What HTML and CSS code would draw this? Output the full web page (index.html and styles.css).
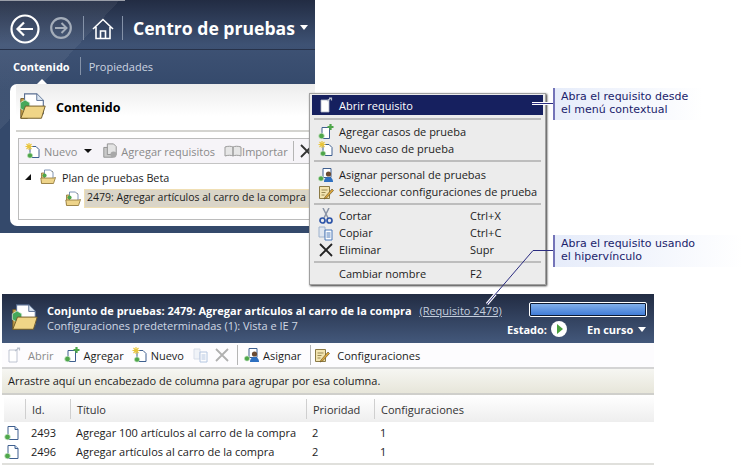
FILE: index.html
```html
<!DOCTYPE html>
<html lang="es">
<head>
  <meta charset="UTF-8">
  <title>Centro de pruebas</title>
  <link rel="stylesheet" href="styles.css">
</head>
<body>
<svg class="defs" width="0" height="0">
  <defs>
    <symbol id="i-doc" viewBox="0 0 16 16">
      <path d="M4 1.5h7l3 3v10H4z" fill="#fff" stroke="#3f5f8f"/>
      <path d="M11 1.5v3h3" fill="#cfe0f2" stroke="#3f5f8f"/>
      <circle cx="3.5" cy="12" r="2.8" fill="#4ea64a" stroke="#cfe8cc" stroke-width=".7"/>
    </symbol>
    <symbol id="i-doc-add" viewBox="0 0 16 16">
      <path d="M4 3.5h7.5v11H4z" fill="#fff" stroke="#3f5f8f"/>
      <circle cx="3.5" cy="12" r="2.8" fill="#4ea64a" stroke="#cfe8cc" stroke-width=".7"/>
      <path d="M12.5 0v6M9.500 3h6" stroke="#4ea64a" stroke-width="2.200"/>
    </symbol>
    <symbol id="i-doc-new" viewBox="0 0 16 16">
      <path d="M5 3.500h6l3 3v8H5z" fill="#fff" stroke="#3f5f8f"/>
      <circle cx="5" cy="12.500" r="2.600" fill="#4ea64a" stroke="#cfe8cc" stroke-width=".7"/>
      <path d="M4 0v7M.500 3.500h7M1.500 1l5 5M6.500 1l-5 5" stroke="#e9c53a" stroke-width="1.100"/>
    </symbol>
    <symbol id="i-open" viewBox="0 0 16 16">
      <path d="M3 3h8v12H3z" fill="#fff" stroke="#aeb6c6" stroke-width=".8"/>
      <path d="M9 4l4-3M11 1h2.500v2.500" fill="none" stroke="#b9c0cc" stroke-width="1.200"/>
    </symbol>
    <symbol id="i-person" viewBox="0 0 16 16">
      <path d="M5 1.500h8v9H5z" fill="#fff" stroke="#3f5f8f"/>
      <circle cx="3" cy="11.500" r="2.600" fill="#4ea64a" stroke="#cfe8cc" stroke-width=".7"/>
      <circle cx="10.500" cy="7" r="2.600" fill="#6b4a30"/>
      <path d="M6 15c0-3.500 2-5 4.500-5s4.500 1.500 4.500 5z" fill="#2d6fc0"/>
    </symbol>
    <symbol id="i-config" viewBox="0 0 16 16">
      <path d="M1.500 2.500h10v12h-10z" fill="#f3e4b0" stroke="#8b7a45"/>
      <path d="M3.500 6h6M3.500 8.500h4M3.500 11h3" stroke="#9a8a55"/>
      <path d="M7 13l7-8 1.500 1.500-7 7.500-2.500 1z" fill="#e0a83a" stroke="#6d5a2c" stroke-width=".7"/>
    </symbol>
    <symbol id="i-folder" viewBox="0 0 16 16">
      <path d="M1.500 4h5l1-1.500h5V14h-11z" fill="#e7c878" stroke="#8d7336" stroke-width=".8"/>
      <path d="M4.500 1h6l2.500 2.500V10h-8.500z" fill="#fff" stroke="#5f7ba3" stroke-width=".8"/>
      <circle cx="4.500" cy="6.500" r="2.100" fill="#4ea64a"/>
      <path d="M.800 9h12.700l2-.500-2 6h-12z" fill="#eed48a" stroke="#8d7336" stroke-width=".8"/>
    </symbol>
    <symbol id="i-folder-big" viewBox="0 0 32 32">
      <path d="M3 7h7v21H3z" fill="#c9a24a" stroke="#6f5a27"/>
      <path d="M7 2h13l7 7v14H7z" fill="#fff" stroke="#5a6f92" stroke-width="1.200"/>
      <path d="M20 2v7h7" fill="#dbe6f2" stroke="#5a6f92"/>
      <path d="M7.500 8.500l5 3v6l-5 3-5-3v-6z" fill="#46a85a" stroke="#d5ecd8" stroke-width=".8"/>
      <path d="M3 28l5-13h21l-4 13z" fill="#f0d587" stroke="#6f5a27"/>
    </symbol>
    <symbol id="i-multi" viewBox="0 0 16 16">
      <path d="M1 2h6v10H1z" fill="#dfe6f0" stroke="#9fb2cc"/>
      <path d="M7 5h7v10H7z" fill="#fff" stroke="#4a78b8"/>
      <path d="M8.500 8h4M8.500 10h4M8.500 12h4" stroke="#4a78b8"/>
    </symbol>
    <symbol id="i-scissors" viewBox="0 0 16 16">
      <path d="M5 0l5 10M11 0L6 10" stroke="#8a94a6" stroke-width="1.500"/>
      <circle cx="4.500" cy="12.500" r="2.500" fill="none" stroke="#2e55a8" stroke-width="1.700"/>
      <circle cx="11.500" cy="12.500" r="2.500" fill="none" stroke="#2e55a8" stroke-width="1.700"/>
    </symbol>
    <symbol id="i-x" viewBox="0 0 16 16">
      <path d="M2 2l12 12M14 2L2 14" stroke="currentColor" stroke-width="1.800"/>
    </symbol>
    <symbol id="i-book" viewBox="0 0 18 12">
      <path d="M1 2c3-1 6-1 8 0v9c-2-1-5-1-8 0zM9 2c2-1 5-1 8 0v9c-3-1-6-1-8 0z" fill="#e6e6e6" stroke="#9b9b9b"/>
    </symbol>
    <symbol id="i-req" viewBox="0 0 18 18">
      <path d="M2 5h10v11H2z" fill="#c9c9c9" stroke="#8c8c8c"/>
      <path d="M6 1h7l3 3v9H6z" fill="#e3e3e3" stroke="#8c8c8c"/>
      <circle cx="13" cy="13" r="3.500" fill="#a8a8a8"/>
    </symbol>
  </defs>
</svg>

<section class="app">
  <header class="app-head">
    <svg class="nav-back" viewBox="0 0 30 30"><circle cx="15" cy="15" r="13.500" fill="none" stroke="#fff" stroke-width="2.200"/><path d="M23 15H8M14 8.500L7.500 15l6.500 6.500" fill="none" stroke="#fff" stroke-width="2.200"/></svg>
    <svg class="nav-next" viewBox="0 0 22 22"><circle cx="11" cy="11" r="9.800" fill="none" stroke="#a4adba" stroke-width="2.200"/><path d="M5 11h11M11.500 6l5 5-5 5" fill="none" stroke="#a4adba" stroke-width="2"/></svg>
    <span class="head-sep"></span>
    <svg class="nav-home" viewBox="0 0 22 22"><path d="M1 11L11 1.500 21 11M4 9v11.500h14V9M8.500 20.500V13h5v7.500" fill="none" stroke="#fff" stroke-width="1.600"/></svg>
    <span class="head-sep"></span>
    <h1 class="app-title">Centro de pruebas</h1>
    <span class="caret"></span>
  </header>
  <nav class="tabs">
    <span class="tab tab-on">Contenido</span>
    <span class="tab-sep"></span>
    <span class="tab">Propiedades</span>
  </nav>
  <div class="card">
    <div class="card-head">
      <svg class="icon-big"><use href="#i-folder-big"/></svg>
      <h2>Contenido</h2>
    </div>
    <div class="tree-box">
      <div class="tree-bar">
        <svg class="ic"><use href="#i-doc-new"/></svg>
        <span class="dim bar-nuevo">Nuevo</span>
        <span class="caret-dark"></span>
        <svg class="ic ic-req"><use href="#i-req"/></svg>
        <span class="dim">Agregar requisitos</span>
        <svg class="ic-book"><use href="#i-book"/></svg>
        <span class="dim">Importar</span>
        <span class="bar-sep"></span>
        <svg class="ic ic-x"><use href="#i-x"/></svg>
      </div>
      <div class="tree-row tree-root">
        <span class="tree-arrow"></span>
        <svg class="ic"><use href="#i-folder"/></svg>
        <span>Plan de pruebas Beta</span>
      </div>
      <div class="tree-row tree-child">
        <svg class="ic"><use href="#i-folder"/></svg>
        <span class="tree-sel">2479: Agregar artículos al carro de la compra</span>
      </div>
    </div>
  </div>
</section>

<section class="suite">
  <header class="suite-head">
    <svg class="icon-suite"><use href="#i-folder-big"/></svg>
    <div class="suite-info">
      <p class="suite-name">Conjunto de pruebas: 2479: Agregar artículos al carro de la compra <a class="suite-link">(Requisito 2479)</a></p>
      <p class="suite-conf">Configuraciones predeterminadas (1): Vista e IE 7</p>
    </div>
    <div class="suite-state">
      <div class="progress"></div>
      <div class="state-row">
        <b>Estado:</b>
        <span class="play"></span>
        <b class="state-val">En curso</b>
        <span class="caret caret-small"></span>
      </div>
    </div>
  </header>
  <div class="suite-bar">
    <svg class="ic"><use href="#i-open"/></svg>
    <span class="dim b-abrir">Abrir</span>
    <svg class="ic b-add"><use href="#i-doc-add"/></svg>
    <span class="b-addt">Agregar</span>
    <svg class="ic b-new"><use href="#i-doc-new"/></svg>
    <span class="b-addt">Nuevo</span>
    <svg class="ic b-copy"><use href="#i-multi"/></svg>
    <svg class="ic b-del"><use href="#i-x"/></svg>
    <span class="bar-sep b-sep"></span>
    <svg class="ic"><use href="#i-person"/></svg>
    <span class="b-addt">Asignar</span>
    <span class="bar-sep b-sep2"></span>
    <svg class="ic"><use href="#i-config"/></svg>
    <span class="b-conf">Configuraciones</span>
  </div>
  <div class="group-hint">Arrastre aquí un encabezado de columna para agrupar por esa columna.</div>
  <div class="grid">
    <div class="grid-row grid-top">
      <span></span><span>Id.</span><span>Título</span><span>Prioridad</span><span>Configuraciones</span>
    </div>
    <div class="grid-row">
      <svg class="ic"><use href="#i-doc"/></svg><span>2493</span><span>Agregar 100 artículos al carro de la compra</span><span>2</span><span>1</span>
    </div>
    <div class="grid-row">
      <svg class="ic"><use href="#i-doc"/></svg><span>2496</span><span>Agregar artículos al carro de la compra</span><span>2</span><span>1</span>
    </div>
  </div>
</section>

<div class="menu">
  <div class="menu-item menu-on"><svg class="ic"><use href="#i-open"/></svg><span>Abrir requisito</span></div>
  <hr>
  <div class="menu-item"><svg class="ic"><use href="#i-doc-add"/></svg><span>Agregar casos de prueba</span></div>
  <div class="menu-item"><svg class="ic"><use href="#i-doc-new"/></svg><span>Nuevo caso de prueba</span></div>
  <hr class="sep-tall">
  <div class="menu-item"><svg class="ic"><use href="#i-person"/></svg><span>Asignar personal de pruebas</span></div>
  <div class="menu-item"><svg class="ic"><use href="#i-config"/></svg><span>Seleccionar configuraciones de prueba</span></div>
  <hr class="sep-short">
  <div class="menu-item"><svg class="ic"><use href="#i-scissors"/></svg><span>Cortar</span><kbd>Ctrl+X</kbd></div>
  <div class="menu-item"><svg class="ic"><use href="#i-multi"/></svg><span>Copiar</span><kbd>Ctrl+C</kbd></div>
  <div class="menu-item"><svg class="ic ic-del"><use href="#i-x"/></svg><span>Eliminar</span><kbd>Supr</kbd></div>
  <hr class="sep-short">
  <div class="menu-item"><span class="ic"></span><span>Cambiar nombre</span><kbd>F2</kbd></div>
</div>

<svg class="leaders" width="744" height="469">
  <path d="M532 103.500h21" fill="none" stroke="#fff" stroke-width="3"/>
  <path d="M532 103.500h21" fill="none" stroke="#2b2c80"/>
  <path d="M495.500 294L487 304" fill="none" stroke="#fff" stroke-width="3"/>
  <path d="M553 250.500h-20L487 304" fill="none" stroke="#2b2c80"/>
</svg>
<p class="note note-menu">Abra el requisito desde<br>el menú contextual</p>
<p class="note note-link">Abra el requisito usando<br>el hipervínculo</p>
</body>
</html>
```

FILE: styles.css
```css
* {
  box-sizing: border-box;
}
html, body {
  margin: 0;
  height: 469px;
  overflow: hidden;
}
body {
  position: relative;
  background: #fff;
  color: #1c1c1c;
  font-family: "Open Sans", "Noto Sans", sans-serif;
  font-size: 11px;
}
p, h1, h2 {
  margin: 0;
}
.defs {
  position: absolute;
}
.ic {
  width: 16px;
  height: 16px;
  flex: none;
}
.dim {
  color: #8a8a8a;
}

/* top window */
.app {
  width: 315px;
  height: 233px;
  background:
    linear-gradient(#9a9ea8, #9a9ea8) no-repeat 0 0 / 125px 1px,
    linear-gradient(132.700deg, rgba(255, 255, 255, .06) 88px, transparent 88px),
    linear-gradient(#222c43, #3e5274 45px, #34496b 90px, #34496b);
  overflow: hidden;
}
.app-head {
  display: flex;
  align-items: center;
  height: 50px;
  padding: 6px 0 0 10px;
  border-bottom: 1px solid #27324a;
}
.nav-back {
  width: 30px;
  height: 30px;
  margin-top: 2px;
}
.nav-next {
  width: 22px;
  height: 22px;
  margin-left: 10px;
}
.nav-home {
  width: 22px;
  height: 22px;
  margin: 2px 8px 0 8px;
}
.head-sep {
  width: 1px;
  height: 24px;
  margin-left: 11px;
  background: #8492a8;
}
.nav-home + .head-sep {
  margin-left: 0;
}
.app-title {
  margin-left: 10px;
  color: #fff;
  font-size: 17.600px;
  font-weight: 700;
  white-space: nowrap;
}
.caret {
  width: 0;
  height: 0;
  margin-left: 5px;
  border: 4px solid transparent;
  border-top: 5px solid #fff;
  border-bottom: 0;
}
.tabs {
  position: relative;
  display: flex;
  align-items: center;
  height: 34px;
  padding: 0 0 2px 13px;
  color: #ccd4e0;
}
.tab-on {
  color: #fff;
  font-weight: 700;
}
.tab-on::after {
  content: "";
  position: absolute;
  left: 37px;
  bottom: 0;
  border: 5px solid transparent;
  border-bottom-color: #fff;
  border-top: 0;
}
.tab-sep {
  width: 1px;
  height: 18px;
  margin: 0 8px 0 10px;
  background: #8492a8;
}
.card {
  height: 142px;
  margin-left: 10px;
  padding-bottom: 7px;
  background: #fff;
  border-radius: 7px 0 0 7px;
}
.card-head {
  display: flex;
  align-items: center;
  height: 48px;
  margin-left: 6px;
  padding-left: 2px;
  background: linear-gradient(#ececec, #fff 70%);
  border-bottom: 2px solid #d4d4d0;
}
.icon-big {
  width: 30px;
  height: 30px;
}
.card-head h2 {
  margin-left: 8px;
  color: #000;
  font-size: 12.500px;
  font-weight: 700;
}
.tree-box {
  height: 82px;
  margin: 6px 0 0 8px;
  border: 1px solid #bcbcbc;
  border-right: 0;
}
.tree-bar {
  display: flex;
  align-items: center;
  height: 25px;
  padding-left: 6px;
  background: #f6f4f8;
  border-bottom: 1px solid #c4c4c4;
  white-space: nowrap;
}
.bar-nuevo {
  margin-left: 3px;
}
.caret-dark {
  width: 0;
  height: 0;
  margin: 0 10px 0 7px;
  border: 4px solid transparent;
  border-top: 4px solid #111;
  border-bottom: 0;
}
.ic-req {
  margin-right: 3px;
}
.ic-book {
  width: 18px;
  height: 12px;
  margin-left: 9px;
}
.bar-sep {
  width: 1px;
  height: 20px;
  margin: 0 5px;
  background: #b5b5b5;
}
.ic-x {
  color: #333;
}
.tree-row {
  display: flex;
  align-items: center;
  white-space: nowrap;
}
.tree-root {
  gap: 6px;
  height: 24px;
  margin-top: 1px;
  padding-left: 6px;
  font-size: 10.800px;
}
.tree-arrow {
  width: 0;
  height: 0;
  margin-right: 3px;
  border-right: 6px solid #111;
  border-top: 6px solid transparent;
}
.tree-child {
  gap: 3px;
  padding-left: 46px;
}
.tree-sel {
  width: 240px;
  height: 19px;
  padding-left: 2px;
  font-size: 10.500px;
  line-height: 15px;
  background: #dad5c8;
  border: 1px solid #f0dfb4;
}

/* bottom suite panel */
.suite {
  width: 652px;
  height: 175px;
  margin: 61px 0 0 2px;
}
.suite-head {
  display: flex;
  height: 49px;
  padding: 8px 7px 0 8px;
  color: #fff;
  background: linear-gradient(#222c43, #43587b);
}
.icon-suite {
  width: 30px;
  height: 32px;
}
.suite-info {
  margin-left: 7px;
  padding-top: 1px;
  flex: 1;
  white-space: nowrap;
}
.suite-name {
  font-weight: 700;
  line-height: 15px;
}
.suite-link {
  margin-left: 5px;
  color: #c4cedd;
  font-weight: 400;
  text-decoration: underline;
}
.suite-conf {
  color: #d0d8e4;
  line-height: 15px;
}
.suite-state {
  width: 140px;
}
.progress {
  width: 118px;
  height: 15px;
  margin-left: 22px;
  background: linear-gradient(#86b3ec, #3b78d6);
  border: 1px solid #fff;
  outline: 1px solid #0c1a33;
  outline-offset: -2px;
  border-radius: 2px;
}
.state-row {
  display: flex;
  align-items: center;
  height: 16px;
  margin-top: 4px;
}
.play {
  position: relative;
  width: 16px;
  height: 16px;
  margin: 0 20px 0 4px;
  background: #fff;
  border-radius: 50%;
}
.play::after {
  content: "";
  position: absolute;
  left: 6px;
  top: 3px;
  border-left: 6px solid #49a03e;
  border-top: 5px solid transparent;
  border-bottom: 5px solid transparent;
}
.caret-small {
  margin-left: 5px;
}
.suite-bar {
  display: flex;
  align-items: center;
  height: 26px;
  padding-left: 4px;
  background: #fdfcfe;
  border-bottom: 2px solid #d4d4d4;
  white-space: nowrap;
}
.b-abrir {
  margin-left: 6px;
}
.b-add {
  margin-left: 11px;
}
.b-addt {
  margin-left: 3px;
}
.b-new {
  margin-left: 8px;
}
.b-copy {
  margin-left: 9px;
  opacity: .4;
}
.b-del {
  margin-left: 5px;
  color: #b0b0b0;
}
.b-sep {
  margin: 0 6px 0 7px;
}
.b-sep2 {
  margin: 0 3px 0 9px;
}
.b-conf {
  margin-left: 7px;
}
.group-hint {
  height: 26px;
  padding: 4px 0 0 6px;
  background: linear-gradient(#f6f6f2, #e7e6da);
  border-bottom: 2px solid #cfcfcb;
}
.grid {
  padding-bottom: 2px;
  border-bottom: 2px solid #e0e0dc;
}
.grid-row {
  display: grid;
  grid-template-columns: 21px 45px 236px 68px 1fr;
  align-items: center;
  height: 19px;
  margin-left: 2px;
}
.grid-row > span {
  padding-left: 6px;
}
.grid-top {
  height: 27px;
  margin-bottom: 1px;
  color: #333;
  background: linear-gradient(#fff, #eeeeee);
}
.grid-top > span {
  height: 20px;
  line-height: 21px;
  border-left: 1px solid #cfcfcf;
}
.grid-top > span:first-child {
  border-left: 0;
}

/* context menu */
.menu {
  position: absolute;
  left: 309px;
  top: 93px;
  width: 237px;
  height: 192px;
  padding: 1px 2px;
  background: #ececec;
  border: 1px solid #a0a0a0;
  box-shadow: 1px 1px 2px #333;
}
.menu hr {
  height: 2px;
  margin: 3px 2px;
  background: #bdbdbd;
  border: 0;
}
.menu hr.sep-tall {
  margin-bottom: 4px;
}
.menu hr.sep-short {
  margin-bottom: 2px;
}
.menu-item {
  display: flex;
  align-items: center;
  height: 17px;
  padding-left: 6px;
  white-space: nowrap;
}
.menu-item > span:nth-child(2) {
  margin-left: 5px;
  flex: 1;
}
.menu-item kbd {
  width: 73px;
  font-family: inherit;
}
.menu-on {
  height: 20px;
  color: #fff;
  background: #16205f;
}
.ic-del {
  color: #222;
}

/* callouts */
.leaders {
  position: absolute;
  left: 0;
  top: 0;
}
.note {
  position: absolute;
  left: 553px;
  width: 150px;
  padding: 2px 0 0 6px;
  color: #1b1d6b;
  font-family: "DejaVu Sans", sans-serif;
  font-size: 11px;
  line-height: 13px;
  background: linear-gradient(90deg, #e6ecfa, #fff);
  border-left: 2px solid #7474b8;
}
.note-menu {
  top: 88px;
  height: 32px;
}
.note-link {
  top: 235px;
  width: 190px;
  height: 32px;
}
```
